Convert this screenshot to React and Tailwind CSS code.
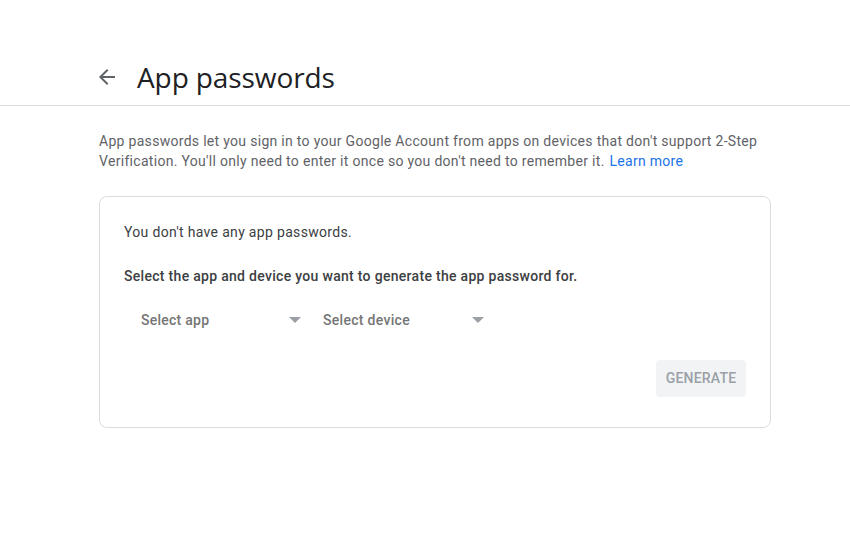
export default function App() {
  return (
    <div className="min-h-[540px] w-[850px] bg-white font-['Roboto',sans-serif]">
      {/* Page header */}
      <header className="box-border h-[106px] border-b border-[#dadce0] pt-[59px]">
        <div className="flex h-9 items-center pl-[95px]">
          <button className="flex h-6 w-6 items-center justify-center text-[#5f6368]">
            <svg viewBox="0 0 24 24" width="24" height="24" fill="currentColor">
              <path d="M20 11H7.83l5.59-5.59L12 4l-8 8 8 8 1.41-1.41L7.83 13H20v-2z" />
            </svg>
          </button>
          <h1 className="ml-[18px] font-['Open_Sans',sans-serif] text-[28px] leading-9 font-normal tracking-[-0.1px] text-[#202124]">
            App passwords
          </h1>
        </div>
      </header>

      <main className="pl-[99px]">
        <p className="mt-[25px] text-[14px] leading-5 tracking-[0.3px] text-[#5f6368]">
          App passwords let you sign in to your Google Account from apps on devices that don't support 2-Step
          <br />
          Verification. You'll only need to enter it once so you don't need to remember it.{" "}
          <a className="ml-px text-[#1a73e8]">Learn more</a>
        </p>

        {/* Generator card */}
        <section className="mt-[25px] w-[672px] rounded-lg border border-[#dadce0] px-6 pt-[25px] pb-[30px]">
          <p className="text-[14px] leading-5 tracking-[0.32px] text-[#3c4043]">You don't have any app passwords.</p>
          <p className="mt-6 text-[14px] leading-5 font-medium tracking-[0.3px] text-[#3c4043]">
            Select the app and device you want to generate the app password for.
          </p>

          <div className="mt-[14px] flex h-10 items-center">
            <div className="flex w-[182px] items-center justify-between pl-[17px] pr-[5px]">
              <span className="text-[14px] font-medium tracking-[0.25px] text-[#757575]">Select app</span>
              <span className="h-0 w-0 border-x-[6px] border-t-[6px] border-x-transparent border-t-[#9aa0a6]" />
            </div>
            <div className="flex w-[183px] items-center justify-between pl-[17px] pr-[5px]">
              <span className="text-[14px] font-medium tracking-[0.3px] text-[#757575]">Select device</span>
              <span className="h-0 w-0 border-x-[6px] border-t-[6px] border-x-transparent border-t-[#9aa0a6]" />
            </div>
          </div>

          <div className="mt-5 flex justify-end">
            <button className="h-[37px] w-[90px] rounded bg-[#f1f3f4] text-[14px] font-medium tracking-[0.2px] text-[#9aa0a6] uppercase">
              Generate
            </button>
          </div>
        </section>
      </main>
    </div>
  );
}
